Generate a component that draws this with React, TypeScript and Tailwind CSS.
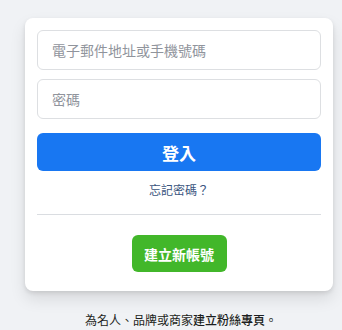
import React from "react";

export default function App() {
  const font = { fontFamily: '"Noto Sans CJK TC", "Noto Sans", sans-serif' };
  return (
    <div className="w-[342px] h-[330px] bg-[#f0f2f5] overflow-hidden" style={font}>
      <div className="ml-[25px] mt-[18px] w-[308px] rounded-lg bg-white px-3 pt-3 pb-[19px] shadow-[0_2px_4px_rgba(0,0,0,0.1),0_8px_16px_rgba(0,0,0,0.1)] flex flex-col">
        <input
          className="h-10 w-full rounded-md border border-[#dddfe2] px-[14px] text-[14px] text-[#1c1e21] placeholder:text-[#90949c] outline-none"
          placeholder="電子郵件地址或手機號碼"
          style={font}
        />
        <input
          className="mt-[9px] h-10 w-full rounded-md border border-[#dddfe2] px-[14px] text-[14px] text-[#1c1e21] placeholder:text-[#90949c] outline-none"
          placeholder="密碼"
          type="password"
          style={font}
        />
        <button className="mt-[14px] h-[38px] w-full rounded-md bg-[#1877f2] text-[17px] font-bold leading-none text-white">
          登入
        </button>
        <a className="mt-[11px] block text-center text-[12px] leading-4 text-[#3b5580]">忘記密碼？</a>
        <div className="mt-4 h-px w-full bg-[#dadde1]" />
        <div className="mt-5 flex justify-center">
          <button className="h-[37px] w-[95px] rounded-md bg-[#42b72a] text-[14px] font-bold leading-none text-white">
            建立新帳號
          </button>
        </div>
      </div>
      <p className="ml-[25px] mt-[21px] w-[308px] pl-1 text-center text-[12px] leading-4 text-[#1c1e21]">
        為名人、品牌或商家<span className="font-medium">建立粉絲專頁</span>。
      </p>
    </div>
  );
}
